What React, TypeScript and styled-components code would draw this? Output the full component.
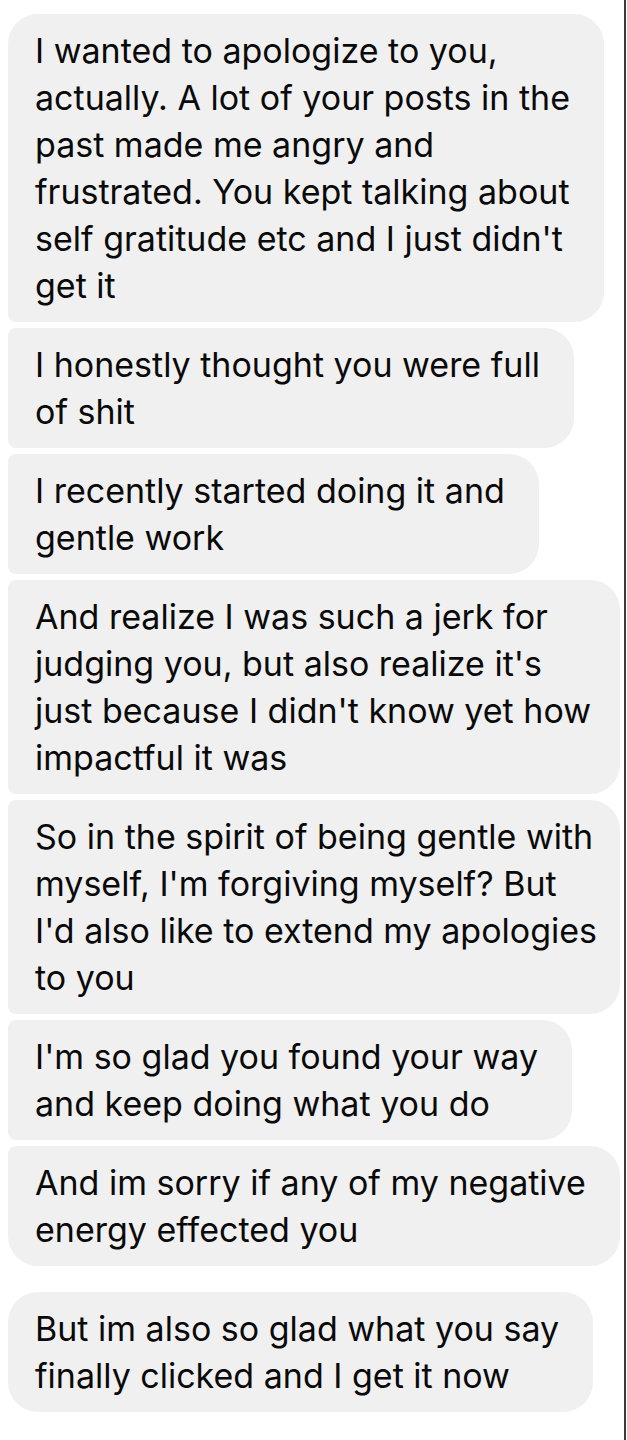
import { createGlobalStyle, styled } from "styled-components";

const GlobalStyle = createGlobalStyle`
  html, body {
    margin: 0;
    padding: 0;
    background: #ffffff;
  }
`;

const Screen = styled.div`
  width: 626px;
  min-height: 1440px;
  border-right: 2px solid #3b3b3b;
  padding: 14px 0 0 8px;
  box-sizing: border-box;
  display: flex;
  flex-direction: column;
  align-items: flex-start;
  font-family: Inter, "Liberation Sans", sans-serif;
`;

const Group = styled.div`
  display: flex;
  flex-direction: column;
  align-items: flex-start;
  gap: 6px;
  margin-bottom: 26px;
`;

const Bubble = styled.div<{ $first?: boolean; $last?: boolean }>`
  max-width: 612px;
  box-sizing: border-box;
  padding: 13px 34px 13px 27px;
  background: #f0f0f0;
  color: #0a0a0a;
  font-size: 34px;
  line-height: 47px;
  border-radius: ${(p) =>
    `${p.$first ? 30 : 8}px 30px 30px ${p.$last ? 30 : 8}px`};
`;

const Line = styled.span`
  display: block;
  white-space: nowrap;
`;

const groups: string[][][] = [
  [
    [
      "I wanted to apologize to you,",
      "actually. A lot of your posts in the",
      "past made me angry and",
      "frustrated. You kept talking about",
      "self gratitude etc and I just didn't",
      "get it",
    ],
    ["I honestly thought you were full", "of shit"],
    ["I recently started doing it and", "gentle work"],
    [
      "And realize I was such a jerk for",
      "judging you, but also realize it's",
      "just because I didn't know yet how",
      "impactful it was",
    ],
    [
      "So in the spirit of being gentle with",
      "myself, I'm forgiving myself? But",
      "I'd also like to extend my apologies",
      "to you",
    ],
    ["I'm so glad you found your way", "and keep doing what you do"],
    ["And im sorry if any of my negative", "energy effected you"],
  ],
  [["But im also so glad what you say", "finally clicked and I get it now"]],
];

export default function App() {
  return (
    <>
      <GlobalStyle />
      <Screen>
        {groups.map((group, gi) => (
          <Group key={gi}>
            {group.map((lines, i) => (
              <Bubble key={i} $first={i === 0} $last={i === group.length - 1}>
                {lines.map((line, li) => (
                  <Line key={li}>{line}</Line>
                ))}
              </Bubble>
            ))}
          </Group>
        ))}
      </Screen>
    </>
  );
}
